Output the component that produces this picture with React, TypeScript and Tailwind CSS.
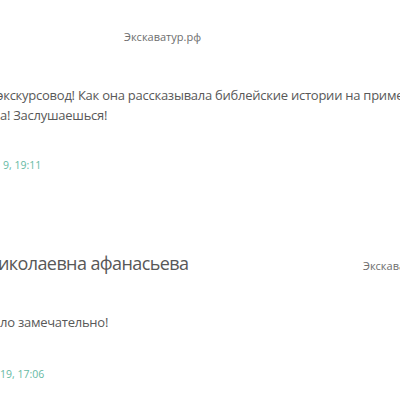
export default function App() {
  return (
    <div className="w-[400px] h-[400px] overflow-hidden bg-white font-['Open_Sans',sans-serif] text-[#585858]">
      {/* отзыв 1 */}
      <div className="pt-[29px] pl-[124px] text-[11px] leading-[16px] text-[#6e6e6e]">Экскаватур.рф</div>
      <div className="mt-[40px] -ml-[3px] whitespace-nowrap text-[13px] leading-[20px] tracking-[-0.25px]">
        <p>экскурсовод! Как она рассказывала библейские истории на примере</p>
        <p className="ml-[3px]">а! Заслушаешься!</p>
      </div>
      <div className="mt-[33px] pl-[3px] text-[10.5px] leading-[14px] text-[#66b9a3]">9, 19:11</div>

      {/* отзыв 2 */}
      <div className="mt-[79px] flex items-baseline whitespace-nowrap">
        <span className="-ml-[2px] text-[18px] leading-[24px] tracking-[-0.6px]">иколаевна афанасьева</span>
        <span className="ml-auto -mr-[40px] text-[11px] text-[#6e6e6e]">Экскаватур.рф</span>
      </div>
      <p className="mt-[38px] whitespace-nowrap text-[13px] leading-[19px] tracking-[-0.25px]">ло замечательно!</p>
      <div className="mt-[35px] text-[10.5px] leading-[14px] text-[#66b9a3]">19, 17:06</div>
    </div>
  );
}
